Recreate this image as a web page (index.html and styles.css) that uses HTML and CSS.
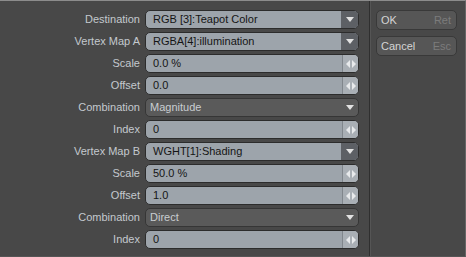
FILE: index.html
```html
<!DOCTYPE html>
<html lang="en">
<head>
  <meta charset="UTF-8" />
  <title>Vertex Map Combine</title>
  <link rel="stylesheet" href="styles.css">
</head>
<body>
  <div class="dialog">
    <!-- Form -->
    <div class="form">
      <label class="label">Destination</label>
      <div class="field popup"><span class="value">RGB [3]:Teapot Color</span><span class="drop"><svg width="8" height="5" viewBox="0 0 8 5"><path d="M0 0H8L4 5Z"/></svg></span></div>

      <label class="label">Vertex Map A</label>
      <div class="field popup"><span class="value">RGBA[4]:illumination</span><span class="drop"><svg width="8" height="5" viewBox="0 0 8 5"><path d="M0 0H8L4 5Z"/></svg></span></div>

      <label class="label">Scale</label>
      <div class="field number"><span class="value">0.0 %</span><span class="spin"><svg width="10" height="8" viewBox="0 0 10 8"><path d="M4 0V8L0 4Z M6 0V8L10 4Z"/></svg></span></div>

      <label class="label">Offset</label>
      <div class="field number"><span class="value">0.0</span><span class="spin"><svg width="10" height="8" viewBox="0 0 10 8"><path d="M4 0V8L0 4Z M6 0V8L10 4Z"/></svg></span></div>

      <label class="label">Combination</label>
      <div class="field choice"><span class="value">Magnitude</span><span class="drop"><svg width="8" height="5" viewBox="0 0 8 5"><path d="M0 0H8L4 5Z"/></svg></span></div>

      <label class="label">Index</label>
      <div class="field number"><span class="value">0</span><span class="spin"><svg width="10" height="8" viewBox="0 0 10 8"><path d="M4 0V8L0 4Z M6 0V8L10 4Z"/></svg></span></div>

      <label class="label">Vertex Map B</label>
      <div class="field popup"><span class="value">WGHT[1]:Shading</span><span class="drop"><svg width="8" height="5" viewBox="0 0 8 5"><path d="M0 0H8L4 5Z"/></svg></span></div>

      <label class="label">Scale</label>
      <div class="field number"><span class="value">50.0 %</span><span class="spin"><svg width="10" height="8" viewBox="0 0 10 8"><path d="M4 0V8L0 4Z M6 0V8L10 4Z"/></svg></span></div>

      <label class="label">Offset</label>
      <div class="field number"><span class="value">1.0</span><span class="spin"><svg width="10" height="8" viewBox="0 0 10 8"><path d="M4 0V8L0 4Z M6 0V8L10 4Z"/></svg></span></div>

      <label class="label">Combination</label>
      <div class="field choice"><span class="value">Direct</span><span class="drop"><svg width="8" height="5" viewBox="0 0 8 5"><path d="M0 0H8L4 5Z"/></svg></span></div>

      <label class="label">Index</label>
      <div class="field number"><span class="value">0</span><span class="spin"><svg width="10" height="8" viewBox="0 0 10 8"><path d="M4 0V8L0 4Z M6 0V8L10 4Z"/></svg></span></div>
    </div>

    <!-- Buttons -->
    <div class="actions">
      <button class="btn"><span>OK</span><span class="key">Ret</span></button>
      <button class="btn"><span>Cancel</span><span class="key">Esc</span></button>
    </div>
  </div>
</body>
</html>
```

FILE: styles.css
```css
* {
  margin: 0;
  padding: 0;
  box-sizing: border-box;
}

body {
  background-color: #484848;
  font-family: 'Liberation Sans', Arial, sans-serif;
  font-size: 11px;
  width: 466px;
  height: 257px;
  overflow: hidden;
}

.dialog {
  display: flex;
  height: 257px;
  border-top: 1px solid #8c8c8c;
  border-right: 1px solid #666;
  border-bottom: 1px solid #555;
}

.form {
  width: 370px;
  padding: 9px 11px 0 0;
  display: grid;
  grid-template-columns: 140px 214px;
  grid-auto-rows: 19px;
  column-gap: 5px;
  row-gap: 3px;
  align-content: start;
  border-right: 1px solid #2f2f2f;
}

.label {
  color: #c4c9ce;
  text-align: right;
  line-height: 19px;
  white-space: nowrap;
}

.field {
  display: flex;
  align-items: stretch;
  border: 1px solid #2c2c2c;
  border-radius: 5px;
  overflow: hidden;
  line-height: 17px;
}

.field .value {
  flex: 1;
  padding-left: 7px;
  color: #151515;
  white-space: nowrap;
}

.popup,
.number {
  background-color: #9da4ab;
}

.popup .drop {
  width: 17px;
  background-color: #5d6065;
  display: flex;
  align-items: center;
  justify-content: center;
}

.drop svg {
  fill: #e2e2e2;
}

.number .spin {
  width: 16px;
  background-color: #a9afb5;
  border-left: 1px solid #80868c;
  display: flex;
  align-items: center;
  justify-content: center;
}

.spin svg {
  fill: #e8eaec;
}

.choice {
  background-color: #5a5a5a;
  border-color: #363636;
}

.choice .value {
  color: #c9cdd1;
  padding-left: 4px;
}

.choice .drop {
  width: 17px;
  display: flex;
  align-items: center;
  justify-content: center;
}

.actions {
  flex: 1;
  border-left: 1px solid #555;
  padding: 9px 0 0 5px;
  display: flex;
  flex-direction: column;
  gap: 6px;
}

.btn {
  width: 81px;
  height: 20px;
  display: flex;
  justify-content: space-between;
  align-items: center;
  padding: 0 5px 0 4px;
  background-color: #565656;
  border: 1px solid #393939;
  border-radius: 5px;
  color: #d4d4d4;
  font-family: inherit;
  font-size: 11px;
}

.btn .key {
  color: #7c7c7c;
}
```
